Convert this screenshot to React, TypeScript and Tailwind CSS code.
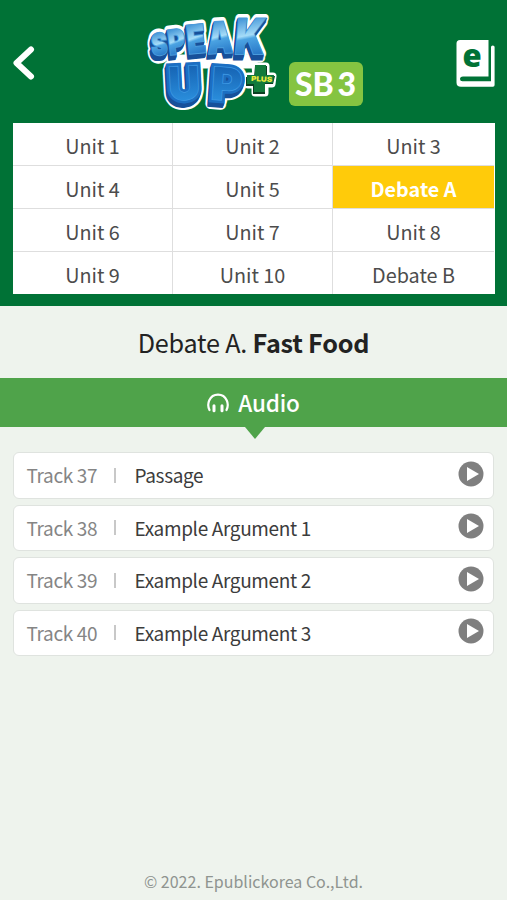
import { clsx } from "clsx";

type Glyph = {
	char: string;
	fill: string;
	edge: string;
	transform: string;
	inline?: boolean;
};

const units = [
	"Unit 1",
	"Unit 2",
	"Unit 3",
	"Unit 4",
	"Unit 5",
	"Debate A",
	"Unit 6",
	"Unit 7",
	"Unit 8",
	"Unit 9",
	"Unit 10",
	"Debate B",
];

const selectedUnit = "Debate A";

const tracks = [
	{ number: 37, title: "Passage" },
	{ number: 38, title: "Example Argument 1" },
	{ number: 39, title: "Example Argument 2" },
	{ number: 40, title: "Example Argument 3" },
];

// Every glyph is drawn at 10px, then placed and stretched by its own transform
const logoGlyphs: Glyph[] = [
	{
		char: "S",
		fill: "url(#speak)",
		edge: "#4a9bdb",
		transform: "translate(18 50) rotate(-4) scale(2.4 3)",
	},
	{
		char: "P",
		fill: "url(#speak)",
		edge: "#4a9bdb",
		transform: "translate(36 49) rotate(-7) scale(2.600 3.4)",
	},
	{
		char: "E",
		fill: "url(#speak)",
		edge: "#4a9bdb",
		transform: "translate(55.500 48) rotate(-6) scale(3 3.900)",
	},
	{
		char: "A",
		fill: "url(#speak)",
		edge: "#4a9bdb",
		transform: "translate(78.500 48) rotate(-3) scale(3.100 4.300)",
	},
	{
		char: "K",
		fill: "url(#speak)",
		edge: "#4a9bdb",
		transform: "translate(106.500 49) skewX(-5) scale(3.900 4.900)",
	},
	{
		char: "U",
		fill: "url(#up)",
		edge: "#1c6fc2",
		transform: "translate(43 95) rotate(-3) scale(4.500 4.700)",
		inline: true,
	},
	{
		char: "P",
		fill: "url(#up)",
		edge: "#1c6fc2",
		transform: "translate(83.500 95.500) rotate(4) scale(4.800 4.600)",
		inline: true,
	},
];

const extrudeSteps = [5, 4, 3, 2, 1];

function SpeakUpLogo() {
	return (
		<svg
			viewBox="0 0 140 115"
			className="h-[115px] w-[140px] shrink-0"
			fontFamily="Inter, sans-serif"
			fontWeight="900"
			fontSize="10"
			textAnchor="middle"
		>
			<defs>
				<linearGradient id="speak" x1="0" y1="0" x2="0.1" y2="1">
					<stop offset="0.2" stopColor="#3f92d6" />
					<stop offset="0.52" stopColor="#a5dcf8" />
					<stop offset="0.58" stopColor="#4ba3e2" />
					<stop offset="0.85" stopColor="#2a7bc9" />
				</linearGradient>
				<linearGradient id="up" x1="0" y1="0" x2="0" y2="1">
					<stop offset="0.2" stopColor="#1664b4" />
					<stop offset="0.85" stopColor="#2b90de" />
				</linearGradient>
			</defs>

			<g aria-hidden="true" stroke="#fff" fill="#fff" strokeLinejoin="round">
				{logoGlyphs.map((glyph, index) => (
					<text
						key={index}
						transform={glyph.transform}
						strokeWidth={glyph.inline ? 11 : 8}
						vectorEffect="non-scaling-stroke"
					>
						{glyph.char}
					</text>
				))}
				<g transform="translate(-1 4)">
					{logoGlyphs.map((glyph, index) => (
						<text
							key={index}
							transform={glyph.transform}
							strokeWidth={glyph.inline ? 11 : 8}
							vectorEffect="non-scaling-stroke"
						>
							{glyph.char}
						</text>
					))}
				</g>
				<path d="M30 50h92l-12 13H30z" />
				<path d="M113 61h11v10h7l-1 8h-7v9h-10v-8h-7v-9h8z" strokeWidth="7" />
			</g>

			<g aria-hidden="true" fill="#17509a" stroke="#17509a">
				{extrudeSteps.map((step) => (
					<g key={step} transform={`translate(${step * -0.3} ${step * 0.9})`}>
						{logoGlyphs.map((glyph, index) => (
							<text
								key={index}
								transform={glyph.transform}
								strokeWidth={glyph.inline ? 6 : 2.5}
								vectorEffect="non-scaling-stroke"
							>
								{glyph.char}
							</text>
						))}
					</g>
				))}
			</g>

			{logoGlyphs.map((glyph, index) => (
				<g key={index}>
					<text
						transform={glyph.transform}
						fill={glyph.fill}
						stroke={glyph.edge}
						strokeWidth={glyph.inline ? 6 : 1.8}
						paintOrder="stroke"
						vectorEffect="non-scaling-stroke"
					>
						{glyph.char}
					</text>
					{glyph.inline && (
						<text
							aria-hidden="true"
							transform={glyph.transform}
							fill="none"
							stroke="#3f9ae4"
							strokeWidth="0.7"
							vectorEffect="non-scaling-stroke"
						>
							{glyph.char}
						</text>
					)}
				</g>
			))}

			<path d="M113 61h12v10h8l-2 8h-8v10h-12v-8h-7v-9h8z" fill="#0a3f22" />
			<path d="M113 60h11v10h8l-1 8h-8v9h-11v-8h-7v-9h8z" fill="#117a3c" />
			<text
				transform="translate(119.500 76.500) rotate(3)"
				fill="#e8ea3c"
				fontSize="7"
				textLength="21"
				lengthAdjust="spacingAndGlyphs"
			>
				PLUS
			</text>
		</svg>
	);
}

function EbookIcon() {
	return (
		<svg viewBox="0 -10 39 60" className="mt-[28px] h-[60px] w-[39px]">
			<path
				d="M4 2H32.500V38.500H7Q4 38.500 4 41T7 43.200H35V9Q35 7.500 36.800 7.500T38.600 9V47Q38.600 48.800 37 48.800H5Q.5 48.800 .5 44.500V5.500Q.5 2 4 2Z"
				fill="#fff"
			/>
			<text
				x="16"
				y="29"
				fill="#007236"
				fontFamily="Open Sans, sans-serif"
				fontWeight="800"
				fontSize="31"
				textAnchor="middle"
			>
				e
			</text>
		</svg>
	);
}

function Header() {
	return (
		<header className="h-[306px] bg-[#007236] px-[13px]">
			<div className="flex h-[123px] w-[482px] items-start justify-between">
				<svg viewBox="0 0 24 36" className="mt-[45px] h-9 w-6">
					<path
						d="M18 4.500 3.500 18 18 31.500"
						fill="none"
						stroke="#fff"
						strokeWidth="6"
						strokeLinecap="round"
						strokeLinejoin="round"
					/>
				</svg>

				<div className="ml-[11px] flex pt-[5px]">
					<SpeakUpLogo />
					<h1
						className="mt-[57px] ml-[7px] flex h-[44px] w-[74px] items-center justify-center
							rounded-md bg-[#85c441] font-['Lato',sans-serif] text-[32px] font-black
							text-white [word-spacing:-4px]"
					>
						SB 3
					</h1>
				</div>

				<EbookIcon />
			</div>

			<nav
				className="grid h-[171px] w-[482px] grid-cols-[159px_159px_1fr] grid-rows-4 gap-px
					border-r border-white bg-[#dedede]"
			>
				{units.map((unit) => (
					<a
						key={unit}
						className={clsx(
							"flex items-center justify-center pt-[3px] text-[19.800px]",
							unit === selectedUnit
								? "bg-[#ffcb0a] font-bold text-white"
								: "bg-white text-[#4c4c4c]"
						)}
					>
						{unit}
					</a>
				))}
			</nav>
		</header>
	);
}

function AudioBar() {
	return (
		<div className="relative flex h-[49px] items-center justify-center bg-[#4fa34a] text-white">
			<svg viewBox="0 0 22 20" className="mr-[9px] h-5 w-[22px]" fill="none" stroke="#fff">
				<path
					d="M2.500 17C1 14 .9 10.500 2.200 7.500 4 3.500 7.200 1.700 11 1.700s7 1.800 8.800 5.800c1.300 3 1.200 6.500-.3 9.500"
					strokeWidth="2.200"
					strokeLinecap="round"
				/>
				<path d="M7 12.800v5M15 12.800v5" strokeWidth="3" strokeLinecap="round" />
			</svg>
			<h3 className="text-[22.500px] font-medium tracking-[-0.2px]">Audio</h3>
			<svg viewBox="0 0 20 12" className="absolute top-full left-[245px] h-3 w-5">
				<path d="M0 0h20L10 12z" fill="#4fa34a" />
			</svg>
		</div>
	);
}

function TrackList() {
	return (
		<ul className="mt-[25px] flex flex-col gap-[6px] px-[13px]">
			{tracks.map((track) => (
				<li
					key={track.number}
					className="flex h-[46.500px] items-center rounded-md border border-[#dfe3df] bg-white
						pr-[9px] pl-[12.500px] text-[19px] tracking-[-0.35px]"
				>
					<span className="w-[87px] text-[#858585]">Track {track.number}</span>
					<span className="mr-[19px] h-[15px] w-[2px] bg-[#c8c8c8]" />
					<span className="grow text-[#3c3c3c]">{track.title}</span>
					<svg viewBox="0 0 26 26" className="mb-[3px] size-[26px]">
						<circle cx="13" cy="13" r="12.500" fill="#7f7f7f" />
						<path d="M9 6 21 13 9 20z" fill="#fff" />
					</svg>
				</li>
			))}
		</ul>
	);
}

function App() {
	return (
		<main
			className="flex h-[900px] w-[507px] flex-col overflow-hidden bg-[#eef3ed]
				font-['Noto_Sans_CJK_KR',sans-serif]"
		>
			<Header />

			<h2
				className="flex h-[72px] items-center justify-center pt-[2px] text-[25.200px]
					tracking-[-0.22px] text-[#222]"
			>
				<span className="whitespace-pre">Debate A. </span>
				<strong className="font-bold">Fast Food</strong>
			</h2>

			<AudioBar />
			<TrackList />

			<footer className="mt-auto pb-[7px] text-center text-[16px] text-[#8f9490]">
				© 2022. Epublickorea Co.,Ltd.
			</footer>
		</main>
	);
}

export default App;
